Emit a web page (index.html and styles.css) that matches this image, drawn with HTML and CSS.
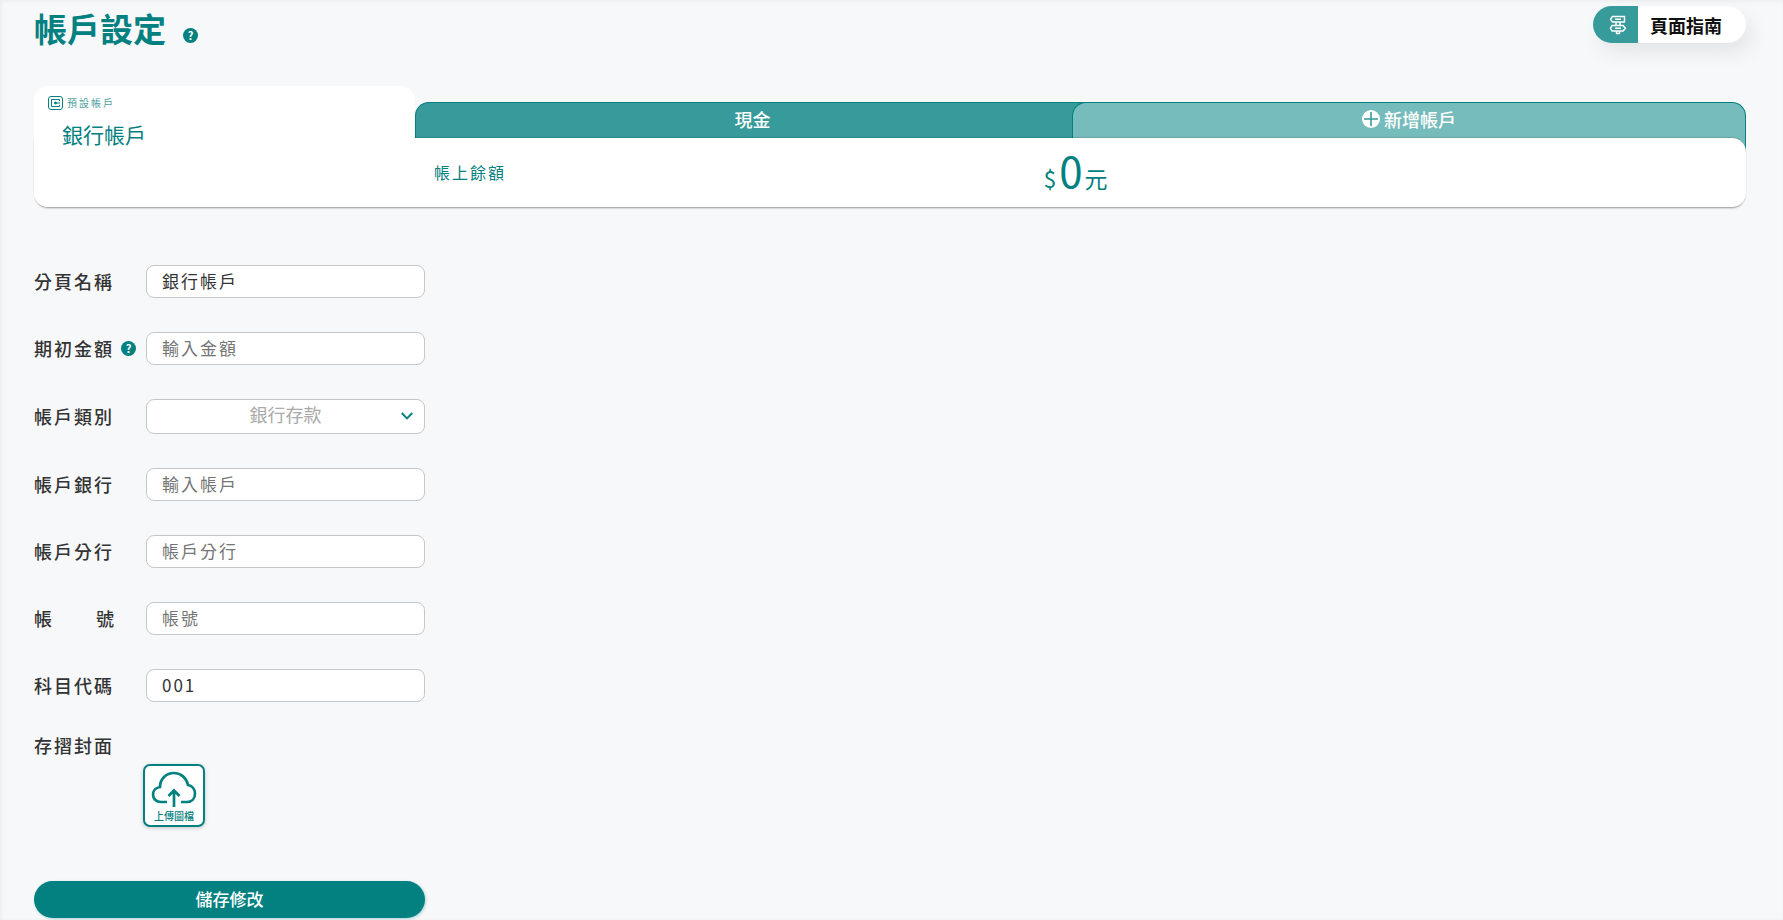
FILE: index.html
```html
<!DOCTYPE html>
<html lang="zh-Hant">
<head>
<meta charset="utf-8">
<meta name="viewport" content="width=device-width, initial-scale=1">
<title>帳戶設定</title>
<link rel="stylesheet" href="styles.css">
</head>
<body>
<main class="page">
  <header class="page-header">
    <h1 class="page-title">帳戶設定</h1>
    <button class="help" type="button" aria-label="說明">?</button>
    <button class="guide" type="button">
      <span class="guide-icon">
        <svg width="18" height="20" viewBox="0 0 18 20" fill="none" stroke="currentColor" stroke-width="1.5" stroke-linejoin="round">
          <path d="M3.500 1.500H15.500V7H3.500L1.500 4.200Z"/>
          <path d="M3 10.500H14L16.500 13.200L14 16H3L1.500 13.200Z"/>
          <path d="M7 7V10.500M11 7V10.500M7.500 16V18.500H10.500V16M6 4.200H12M6 13.200H12"/>
        </svg>
      </span>
      <span class="guide-text">頁面指南</span>
    </button>
  </header>

  <section class="accounts">
    <button class="tab tab-current" type="button">
      <span class="tab-note">
        <svg width="15" height="14" viewBox="0 0 15 14" fill="none" stroke="#038080">
          <rect x="0.500" y="0.500" width="14" height="13" rx="2.500"/>
          <path d="M11.500 5V3.500H3.500V10.500H11.500V9"/>
          <path d="M12 7H7"/><circle cx="7.500" cy="7" r="1" fill="#038080"/>
        </svg>
        預設帳戶
      </span>
      <span class="tab-name">銀行帳戶</span>
    </button>
    <button class="tab tab-cash" type="button">現金</button>
    <button class="tab tab-add" type="button">
      <svg width="18" height="18" viewBox="0 0 18 18">
        <circle cx="9" cy="9" r="9" fill="#fff"/>
        <path d="M9 2V16M2 9H16" stroke="#369b9a" stroke-width="1.600"/>
      </svg>
      新增帳戶
    </button>
    <div class="balance">
      <span class="balance-label">帳上餘額</span>
      <span class="balance-amount">$<strong class="balance-number">0</strong>元</span>
    </div>
  </section>

  <form class="form">
    <div class="row">
      <label class="label" for="name">分頁名稱</label>
      <input class="field" id="name" type="text" value="銀行帳戶">
    </div>
    <div class="row">
      <span class="label-group">
        <label class="label" for="opening">期初金額</label>
        <button class="help" type="button" aria-label="說明">?</button>
      </span>
      <input class="field" id="opening" type="text" placeholder="輸入金額">
    </div>
    <div class="row">
      <label class="label" for="kind">帳戶類別</label>
      <span class="select-box">
        <select class="field field-select" id="kind"><option>銀行存款</option></select>
        <svg class="chevron" width="12" height="8" viewBox="0 0 12 8" fill="none" stroke="currentColor" stroke-width="1.900"><path d="M0.700 1L6 6.300L11.300 1"/></svg>
      </span>
    </div>
    <div class="row">
      <label class="label" for="bank">帳戶銀行</label>
      <input class="field" id="bank" type="text" placeholder="輸入帳戶">
    </div>
    <div class="row">
      <label class="label" for="branch">帳戶分行</label>
      <input class="field" id="branch" type="text" placeholder="帳戶分行">
    </div>
    <div class="row">
      <label class="label label-spread" for="number"><span>帳</span><span>號</span></label>
      <input class="field" id="number" type="text" placeholder="帳號">
    </div>
    <div class="row">
      <label class="label" for="code">科目代碼</label>
      <input class="field" id="code" type="text" value="001">
    </div>
    <div class="cover">
      <span class="label">存摺封面</span>
      <button class="upload" type="button">
        <svg width="46" height="38" viewBox="0 0 46 38" fill="none" stroke="currentColor" stroke-width="2.700">
          <path d="M16 32H10C5 32 2 28.500 2 24.500C2 20.500 5 17.500 9 17C9 9 15 3 23 3C30 3 35.500 8 37 15C41 15.500 44 19 44 23.500C44 28.500 41 32 36 32H30"/>
          <path d="M23 37V21M17.500 26L23 20.500L28.500 26"/>
        </svg>
        上傳圖檔
      </button>
    </div>
    <button class="save" type="submit">儲存修改</button>
  </form>
</main>
</body>
</html>
```
FILE: styles.css
```css
* { box-sizing: border-box; }

body {
  margin: 0;
  min-height: 100vh;
  background: #f7f8fa;
  box-shadow: inset 1px 1px 4px rgba(0, 0, 0, 0.06);
  color: #333;
  font-family: "Noto Sans CJK TC", sans-serif;
  letter-spacing: 2px;
}

button, input, select {
  margin: 0;
  padding: 0;
  border: 0;
  font-family: inherit;
  letter-spacing: inherit;
}

button { cursor: pointer; }

.page { padding: 6px 37px 2px 34px; }

.page-header {
  display: flex;
  align-items: flex-start;
  height: 80px;
}

.page-title {
  margin: 0;
  color: #038080;
  font-size: 33px;
  font-weight: 700;
  line-height: 44px;
  letter-spacing: 0;
}

.help {
  width: 15px;
  height: 15px;
  border-radius: 50%;
  background: #038080;
  color: #fff;
  font-size: 11px;
  font-weight: 700;
  line-height: 15px;
  letter-spacing: 0;
}

.page-header .help { margin: 22px 0 0 17px; }

.guide {
  display: flex;
  margin-left: auto;
  border-radius: 19px;
  overflow: hidden;
  background: #fff;
  box-shadow: 6px 10px 20px rgba(0, 0, 0, 0.08);
  color: #111;
  font-size: 18px;
  font-weight: 700;
  line-height: 37px;
  letter-spacing: 0;
}

.guide-icon {
  display: grid;
  place-items: center;
  width: 45px;
  padding-left: 4px;
  background: #369b9a;
  color: #fff;
}

.guide-text { padding: 1px 24px 0 12px; line-height: 36px; }

.accounts {
  display: grid;
  grid-template-columns: 381fr 657fr 674fr;
  grid-template-rows: 52px auto;
}

.tab {
  height: 36px;
  align-self: end;
  border: 1px solid #038080;
  border-bottom: 0;
  color: #fff;
  font-size: 18px;
  font-weight: 500;
  letter-spacing: 0;
}

.tab-current {
  z-index: 2;
  grid-area: 1 / 1 / 3 / 2;
  display: flex;
  flex-direction: column;
  align-items: flex-start;
  height: auto;
  align-self: stretch;
  padding: 8px 14px;
  border: 0;
  border-radius: 14px;
  background: #fff;
  color: #038080;
}

.tab-note {
  display: flex;
  align-items: center;
  gap: 4px;
  color: #4f9fa0;
  font-size: 10px;
  font-weight: 400;
  line-height: 18px;
  letter-spacing: 2px;
}

.tab-name {
  padding: 7px 14px;
  font-size: 21px;
  font-weight: 400;
  line-height: 30px;
}

.tab-cash {
  grid-area: 1 / 2;
  margin-right: -14px;
  padding: 0 0 3px 4px;
  border-radius: 14px 0 0 0;
  background: #369b9a;
}

.tab-add {
  grid-area: 1 / 3;
  display: flex;
  align-items: center;
  justify-content: center;
  gap: 4px;
  height: 50px;
  margin-bottom: -14px;
  padding-bottom: 17px;
  border-radius: 14px 14px 0 0;
  background: #77bcbc;
}

.balance {
  z-index: 1;
  grid-area: 2 / 1 / 3 / 4;
  display: grid;
  grid-template-columns: 381fr 1331fr;
  align-items: center;
  min-height: 69px;
  border-radius: 0 14px 14px 14px;
  background: #fff;
  box-shadow: 0 2px 2px -1px rgba(0, 0, 0, 0.4), 0 -1px 2px -1px rgba(0, 0, 0, 0.4);
  color: #038080;
}

.balance-label {
  grid-area: 1 / 2;
  padding: 0 0 2px 19px;
  font-size: 16px;
}

.balance-amount {
  grid-area: 1 / 2;
  justify-self: center;
  padding: 2px 8px 0 0;
  font-size: 23px;
  line-height: 56px;
}

.balance-number {
  margin: 0 2px 0 1px;
  font-size: 42px;
  font-weight: 400;
  letter-spacing: 0;
}

.form {
  display: flex;
  flex-direction: column;
  gap: 34px;
  width: 391px;
  max-width: 100%;
  padding-top: 58px;
}

.row {
  display: flex;
  align-items: center;
}

.row > :first-child {
  flex: none;
  width: 112px;
}

.label {
  padding-bottom: 2px;
  font-size: 18px;
  font-weight: 500;
  line-height: 30px;
}

.label-group {
  display: flex;
  align-items: center;
  gap: 7px;
}

.row .label-spread {
  display: flex;
  justify-content: space-between;
  padding-right: 30px;
}

.field {
  flex: 1;
  min-width: 0;
  width: 100%;
  height: 33px;
  padding: 0 15px 3px;
  border: 1px solid #c5c7c9;
  border-radius: 8px;
  background: #fff;
  color: #333;
  font-size: 17px;
}

.field::placeholder { color: #757575; }

.select-box {
  position: relative;
  display: flex;
  flex: 1;
}

.field-select {
  height: 35px;
  padding-bottom: 5px;
  appearance: none;
  color: #aaa;
  font-size: 18px;
  letter-spacing: 0;
  text-align-last: center;
}

.chevron {
  position: absolute;
  top: 13px;
  right: 12px;
  color: #038080;
  pointer-events: none;
}

.cover {
  display: flex;
  flex-direction: column;
  align-items: flex-start;
  margin-top: -6px;
}

.upload {
  display: flex;
  flex-direction: column;
  align-items: center;
  gap: 1px;
  width: 62px;
  margin: 2px 0 0 109px;
  padding: 4px 0 2px;
  border: 2px solid #038080;
  border-radius: 7px;
  background: #fff;
  box-shadow: 0 1px 4px rgba(0, 0, 0, 0.2);
  color: #038080;
  font-size: 10px;
  font-weight: 500;
  line-height: 14px;
  letter-spacing: 0;
}

.save {
  margin-top: 20px;
  padding-bottom: 1px;
  border-radius: 19px;
  background: #038080;
  box-shadow: 1px 1px 3px rgba(3, 128, 128, 0.3);
  color: #fff;
  font-size: 17px;
  font-weight: 500;
  line-height: 36px;
  letter-spacing: 0;
}
```
